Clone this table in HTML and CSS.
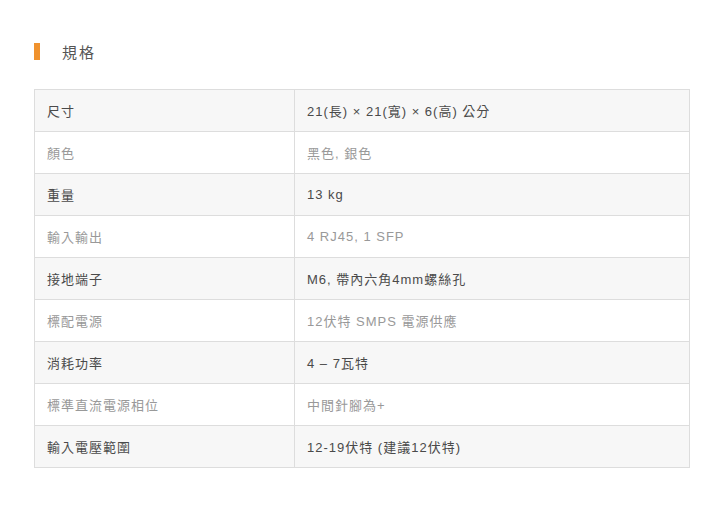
FILE: index.html
```html
<!DOCTYPE html>
<html lang="zh-Hant">
<head>
<meta charset="utf-8">
<link rel="stylesheet" href="styles.css">
</head>
<body>
<div class="page">
  <h2 class="title"><span class="bar"></span>規格</h2>
  <table class="spec">
    <tr class="odd"><td class="k">尺寸</td><td>21(長) × 21(寬) × 6(高) 公分</td></tr>
    <tr class="even"><td class="k">顏色</td><td>黑色, 銀色</td></tr>
    <tr class="odd"><td class="k">重量</td><td>13 kg</td></tr>
    <tr class="even"><td class="k">輸入輸出</td><td>4 RJ45, 1 SFP</td></tr>
    <tr class="odd"><td class="k">接地端子</td><td>M6, 帶內六角4mm螺絲孔</td></tr>
    <tr class="even"><td class="k">標配電源</td><td>12伏特 SMPS 電源供應</td></tr>
    <tr class="odd"><td class="k">消耗功率</td><td>4 – 7瓦特</td></tr>
    <tr class="even"><td class="k">標準直流電源相位</td><td>中間針腳為+</td></tr>
    <tr class="odd"><td class="k">輸入電壓範圍</td><td>12-19伏特 (建議12伏特)</td></tr>
  </table>
</div>
</body>
</html>
```
FILE: styles.css
```css
html, body {
  margin: 0;
  padding: 0;
  background: #fff;
}
body {
  font-family: "Liberation Sans", "Noto Sans CJK TC", sans-serif;
  color: #333;
}
.page {
  padding: 43px 23px 0 34px;
}
.title {
  display: flex;
  align-items: center;
  gap: 22px;
  margin: 0 0 29px 0;
  height: 17px;
  font-size: 15px;
  font-weight: normal;
  letter-spacing: 2px;
  color: #555;
}
.bar {
  display: block;
  width: 6px;
  height: 17px;
  background: #f0922e;
}
.spec {
  width: 656px;
  border-collapse: collapse;
  font-size: 13px;
  letter-spacing: 1px;
}
.spec td {
  border: 1px solid #ddd;
  height: 42px;
  padding: 0 12px;
  box-sizing: border-box;
  vertical-align: middle;
}
.spec td.k {
  width: 260px;
}
.odd {
  background: #f7f7f7;
  color: #4a4a4a;
}
.even {
  background: #fff;
  color: #999;
}
```
